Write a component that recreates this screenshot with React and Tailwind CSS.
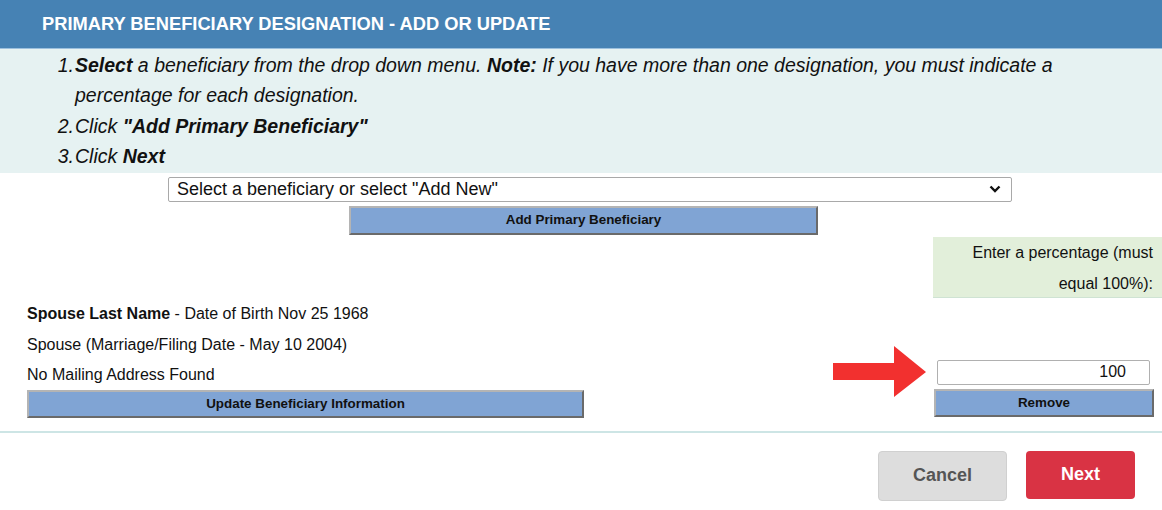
import React from "react";

function OldButton({ children, className = "" }) {
  return (
    <div
      className={
        "flex items-center justify-center bg-[#80a4d4] border-2 border-t-[#b4b4b4] border-l-[#b4b4b4] border-r-[#6a6a6a] border-b-[#6a6a6a] text-[13.4px] font-bold text-[#111] " +
        className
      }
    >
      {children}
    </div>
  );
}

export default function App() {
  return (
    <div className="relative w-[1162px] h-[510px] bg-white font-['Liberation_Sans',Arial,sans-serif] text-[#222] overflow-hidden">
      {/* Header */}
      <div className="h-[49px] bg-[#4682b4] border-b border-[#9cc0de] flex items-center pl-[42px]">
        <span className="text-white font-bold text-[18.3px] mt-[-1px]">
          PRIMARY BENEFICIARY DESIGNATION - ADD OR UPDATE
        </span>
      </div>

      {/* Instructions */}
      <div className="bg-[#e6f2f2] pt-[1px] pb-[1px] text-[19.5px] italic leading-[30.4px] text-[#111]">
        <div className="flex pl-[56px]">
          <span className="w-[19px] shrink-0 text-right pr-[1px]">1.</span>
          <div className="w-[1000px]">
            <b>Select</b> a beneficiary from the drop down menu. <b>Note:</b> If you have more than one designation, you must indicate a percentage for each designation.
          </div>
        </div>
        <div className="flex pl-[56px]">
          <span className="w-[19px] shrink-0 text-right pr-[1px]">2.</span>
          <div>
            Click <b>"Add Primary Beneficiary"</b>
          </div>
        </div>
        <div className="flex pl-[56px]">
          <span className="w-[19px] shrink-0 text-right pr-[1px]">3.</span>
          <div>
            Click <b>Next</b>
          </div>
        </div>
      </div>

      {/* Select */}
      <div className="pt-[4px] pl-[168px]">
        <div className="w-[844px] h-[25px] border border-[#a9a9a9] rounded-[2px] flex items-center justify-between pl-[8px] pr-[10px] text-[18px] text-[#111] bg-white">
          <span>Select a beneficiary or select "Add New"</span>
          <svg width="12" height="8" viewBox="0 0 12 8">
            <path d="M1.5 1.5 L6 6 L10.5 1.5" fill="none" stroke="#111" strokeWidth="2.4" />
          </svg>
        </div>
      </div>

      {/* Add button */}
      <div className="pt-[4px] pl-[349px]">
        <OldButton className="w-[469px] h-[29px]">Add Primary Beneficiary</OldButton>
      </div>

      {/* Two-column area */}
      <div className="flex pt-[2px]">
        <div className="w-[933px]">
          <div className="h-[62px]" />
          <div className="pl-[27px] text-[16px] text-[#111]">
            <div className="h-[31px] flex items-center">
              <span>
                <b>Spouse Last Name</b> - Date of Birth Nov 25 1968
              </span>
            </div>
            <div className="h-[31px] flex items-center">Spouse (Marriage/Filing Date - May 10 2004)</div>
            <div className="h-[29px] flex items-center">No Mailing Address Found</div>
            <OldButton className="w-[557px] h-[28px]">Update Beneficiary Information</OldButton>
          </div>
        </div>
        <div className="w-[229px]">
          <div className="h-[61px] bg-[#e2efda] border-b border-[#cfe3d3] text-right pr-[9px] text-[16px] leading-[31px] text-[#111]">
            Enter a percentage (must
            <br />
            equal 100%):
          </div>
          <div className="h-[62px]" />
          <div className="pl-[4px]">
            <div className="w-[213px] h-[25px] border border-[#b0b0b0] rounded-[2px] flex items-center justify-end pr-[23px] text-[16px] text-[#111]">
              100
            </div>
          </div>
          <div className="pt-[4px] pl-[1px]">
            <OldButton className="w-[220px] h-[28px]">Remove</OldButton>
          </div>
        </div>
      </div>

      {/* Separator */}
      <div className="mt-[13px] h-[2px] bg-[#cde5e5]" />

      {/* Footer buttons */}
      <div className="flex justify-end pr-[27px] pt-[18px] gap-[19px]">
        <div className="w-[129px] h-[50px] rounded-[4px] bg-[#dddddd] border border-[#d0d0d0] flex items-center justify-center text-[18px] font-bold text-[#555]">
          Cancel
        </div>
        <div className="w-[109px] h-[48px] rounded-[4px] bg-[#d93344] flex items-center justify-center text-[18px] font-bold text-white">
          Next
        </div>
      </div>

      {/* Red arrow annotation */}
      <svg
        className="absolute left-[833px] top-[345px]"
        width="94"
        height="53"
        viewBox="0 0 94 53"
      >
        <polygon points="0,18 61,18 61,1 93,27 61,52 61,35 0,35" fill="#f2302f" />
      </svg>
    </div>
  );
}
